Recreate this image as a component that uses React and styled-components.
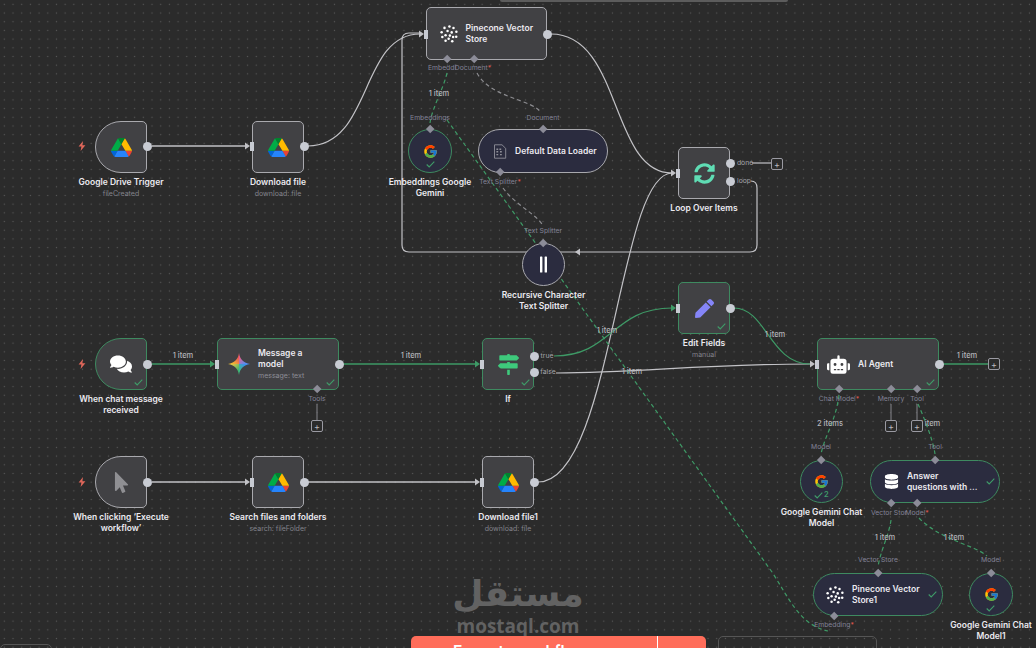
import React from "react";
import styled, { createGlobalStyle } from "styled-components";
import { FaComments, FaDatabase, FaMapSigns, FaMousePointer, FaPen, FaRobot, FaSyncAlt } from "react-icons/fa";
import { FcGoogle } from "react-icons/fc";

const GlobalStyle = createGlobalStyle`
  html, body { margin: 0; padding: 0; background: #2b2b2b; }
  body { font-family: Inter, "Liberation Sans", sans-serif; overflow: hidden; }
`;

const Canvas = styled.div`
  position: relative;
  width: 1036px;
  height: 648px;
  overflow: hidden;
  background-color: #2b2b2b;
  background-image: radial-gradient(circle, #585858 0.7px, transparent 1px);
  background-size: 8.7px 8.7px;
`;

const Wires = styled.svg`
  position: absolute;
  inset: 0;
  width: 1036px;
  height: 648px;
`;

const TopHandle = styled.div`
  position: absolute;
  top: 0;
  left: 500px;
  width: 288px;
  height: 2px;
  background: #5c5c5c;
  border-radius: 0 0 4px 4px;
`;

const NodeBox = styled.div`
  position: absolute;
  left: ${(p) => p.$x}px;
  top: ${(p) => p.$y}px;
  width: ${(p) => p.$w}px;
  height: ${(p) => p.$h}px;
  box-sizing: border-box;
  display: flex;
  align-items: center;
  justify-content: ${(p) => (p.$title ? "flex-start" : "center")};
  padding: 0 ${(p) => (p.$title ? p.$pad : 0)}px;
  gap: 8px;
  background: ${(p) => (p.$round ? "#2b2c3f" : "#414144")};
  border: 1.5px solid ${(p) => (p.$ok ? "#3e8a60" : "#a9a9ae")};
  border-radius: ${(p) => (p.$round ? "22px" : p.$trigger ? "26px 5px 5px 26px" : "5px")};

  & > svg {
    flex-shrink: 0;
  }
`;

const InlineTitle = styled.div`
  font-size: 8.5px;
  line-height: 11px;
  font-weight: 600;
  color: #eceaf0;
  white-space: pre;
`;

const InlineSub = styled.div`
  font-size: 7px;
  line-height: 11px;
  font-weight: 400;
  color: #8d8d96;
`;

const Caption = styled.div`
  position: absolute;
  top: calc(100% + 5px);
  left: 50%;
  transform: translateX(-50%);
  width: 130px;
  text-align: center;
  font-size: 8.5px;
  line-height: 11px;
  font-weight: 600;
  color: #eceaf0;
  white-space: pre-line;
`;

const CaptionSub = styled.div`
  font-size: 7px;
  line-height: 11px;
  font-weight: 400;
  color: #83838c;
`;

const Check = styled.svg`
  position: absolute;
  right: ${(p) => p.$right}px;
  bottom: ${(p) => p.$bottom}px;
  width: 9px;
  height: 7px;
`;

const CheckCount = styled.span`
  position: absolute;
  left: 23px;
  bottom: 3px;
  font-size: 7.5px;
  line-height: 9px;
  font-weight: 600;
  color: #3f9b68;
`;

const Bolt = styled.svg`
  position: absolute;
  left: ${(p) => p.$x}px;
  top: ${(p) => p.$y}px;
  width: 8px;
  height: 10px;
`;

const OutDot = styled.span`
  position: absolute;
  left: ${(p) => p.$x - 4.5}px;
  top: ${(p) => p.$y - 4.5}px;
  width: 9px;
  height: 9px;
  border-radius: 50%;
  background: #c8cbd3;
`;

const InPin = styled.span`
  position: absolute;
  left: ${(p) => p.$x - 2}px;
  top: ${(p) => p.$y - 4.5}px;
  width: 4px;
  height: 9px;
  background: #c8cbd3;
`;

const Diamond = styled.span`
  position: absolute;
  left: ${(p) => p.$x - 3.2}px;
  top: ${(p) => p.$y - 3.2}px;
  width: 6.4px;
  height: 6.4px;
  background: #8c8c98;
  transform: rotate(45deg);
`;

const PortLabel = styled.span`
  position: absolute;
  left: ${(p) => p.$x}px;
  top: ${(p) => p.$y - 5}px;
  transform: translateX(-50%);
  font-size: 6.8px;
  line-height: 10px;
  color: ${(p) => (p.$out ? "#a6a6ac" : "#828296")};
  white-space: nowrap;
`;

const Required = styled.span`
  color: #e0584f;
`;

const ItemCount = styled.span`
  position: absolute;
  left: ${(p) => p.$x}px;
  top: ${(p) => p.$y - 5}px;
  transform: translateX(-50%);
  font-size: 7.5px;
  line-height: 10px;
  font-weight: 500;
  color: #b4b4ba;
  white-space: nowrap;
`;

const AddButton = styled.span`
  position: absolute;
  left: ${(p) => p.$x}px;
  top: ${(p) => p.$y}px;
  width: 12px;
  height: 12px;
  box-sizing: border-box;
  display: flex;
  align-items: center;
  justify-content: center;
  border: 1px solid #9a9aa2;
  border-radius: 2px;
  background: #2b2b2b;
  color: #b8b8be;
  font-size: 9px;
  line-height: 9px;
`;

const Watermark = styled.div`
  position: absolute;
  left: 450px;
  top: 572px;
  width: 136px;
  display: flex;
  flex-direction: column;
  align-items: center;
  color: #626262;
  font-weight: 700;
`;

const WatermarkArabic = styled.div`
  font-family: "DejaVu Sans", sans-serif;
  font-size: 36px;
  line-height: 44px;
  height: 44px;
`;

const WatermarkLatin = styled.div`
  font-family: "Open Sans", sans-serif;
  font-size: 19px;
  line-height: 20px;
`;

const ExecuteBar = styled.div`
  position: absolute;
  left: 411px;
  top: 636px;
  width: 295px;
  height: 44px;
  display: flex;
  border-radius: 5px 5px 0 0;
  background: #ff6d5a;
  color: #fff;
  font-size: 15.5px;
  font-weight: 600;
`;

const ExecuteLabel = styled.div`
  flex: 1;
  padding: 6px 0 0 42px;
  border-right: 1px solid #fff;
`;

const ExecuteArrow = styled.div`
  width: 48px;
`;

const GhostButton = styled.div`
  position: absolute;
  left: ${(p) => p.$x}px;
  top: ${(p) => p.$y}px;
  width: ${(p) => p.$w}px;
  height: 40px;
  box-sizing: border-box;
  border: 1px solid #555;
  border-radius: 5px;
`;

const DriveIcon = () => (
  <svg width="21" height="19" viewBox="0 0 87.3 78">
    <path d="m6.6 66.85 3.85 6.65c.8 1.4 1.95 2.5 3.3 3.3l13.75-23.8h-27.5c0 1.55.4 3.1 1.2 4.5z" fill="#0066da" />
    <path d="m43.65 25-13.75-23.8c-1.35.8-2.5 1.9-3.3 3.3l-25.4 44a9.06 9.06 0 0 0 -1.2 4.5h27.5z" fill="#00ac47" />
    <path d="m73.55 76.8c1.35-.8 2.5-1.9 3.3-3.3l1.6-2.75 7.65-13.25c.8-1.4 1.2-2.95 1.2-4.5h-27.502l5.852 11.5z" fill="#ea4335" />
    <path d="m43.65 25 13.75-23.8c-1.35-.8-2.9-1.2-4.5-1.2h-18.5c-1.6 0-3.15.45-4.5 1.2z" fill="#00832d" />
    <path d="m59.8 53h-32.3l-13.75 23.8c1.35.8 2.9 1.2 4.5 1.2h50.8c1.6 0 3.15-.45 4.5-1.2z" fill="#2684fc" />
    <path d="m73.4 26.5-12.7-22c-.8-1.4-1.95-2.5-3.3-3.3l-13.75 23.8 16.15 28h27.45c0-1.55-.4-3.1-1.2-4.5z" fill="#ffba00" />
  </svg>
);

const GeminiIcon = () => (
  <svg width="22" height="22" viewBox="0 0 24 24">
    <defs>
      <linearGradient id="gemTL" x1="0" y1="0.5" x2="0.5" y2="0">
        <stop offset="0" stopColor="#f2b632" />
        <stop offset="1" stopColor="#ee5a55" />
      </linearGradient>
      <linearGradient id="gemTR" x1="0.5" y1="0" x2="1" y2="0.5">
        <stop offset="0" stopColor="#e8608f" />
        <stop offset="1" stopColor="#5b8cf0" />
      </linearGradient>
      <linearGradient id="gemBL" x1="0" y1="0.5" x2="0.5" y2="1">
        <stop offset="0" stopColor="#d9c24a" />
        <stop offset="1" stopColor="#3fb56e" />
      </linearGradient>
      <linearGradient id="gemBR" x1="0.5" y1="1" x2="1" y2="0.5">
        <stop offset="0" stopColor="#3fb98a" />
        <stop offset="1" stopColor="#3f8ef0" />
      </linearGradient>
    </defs>
    <path d="M12 0C12.8 6.6 17.4 11.2 24 12H12Z" fill="url(#gemTR)" />
    <path d="M24 12C17.4 12.8 12.8 17.4 12 24V12Z" fill="url(#gemBR)" />
    <path d="M12 24C11.2 17.4 6.6 12.8 0 12H12Z" fill="url(#gemBL)" />
    <path d="M0 12C6.6 11.2 11.2 6.6 12 0V12Z" fill="url(#gemTL)" />
  </svg>
);

// ring of small blobs, roughly the pinecone mark at this size
const PineconeIcon = () => {
  const blobs = [
    [10.5, 1.6], [5, 3.2], [15, 3.4], [1.8, 8], [18.2, 7.6], [2.6, 13.4], [18, 13], [6.2, 17.6], [13.6, 18],
    [8.4, 6.6], [13, 8.2], [6.2, 11.4], [11, 11.8], [14.6, 13.4], [9.6, 15.4],
  ];
  return (
    <svg width="18" height="18" viewBox="0 0 20 20">
      {blobs.map(([cx, cy]) => (
        <circle key={`${cx}-${cy}`} cx={cx} cy={cy} r="1.4" fill="#fff" />
      ))}
    </svg>
  );
};

const LoaderIcon = () => (
  <svg width="14" height="15" viewBox="0 0 14 15" fill="none" stroke="#8f8f98" strokeWidth="0.9">
    <path d="M1.5.8H9L12.7 4.4V14.2H1.5Z" />
    <path d="M3.4 5.2h1.8M6.4 5.2h1.8M3.4 7.8h1.8M7 7.8h1.8M3.4 10.6h1.8M7 10.6h1.8" strokeWidth="1.4" />
  </svg>
);

const SplitterIcon = () => (
  <svg width="9" height="17" viewBox="0 0 9 17" fill="#fff">
    <rect x="1" y="0.5" width="2.4" height="16" rx="0.6" />
    <rect x="5.6" y="0.5" width="2.4" height="16" rx="0.6" />
  </svg>
);

const nodes = [
  { x: 95, y: 121, trigger: true, icon: <DriveIcon />, caption: "Google Drive Trigger", sub: "fileCreated" },
  { x: 252, y: 121, icon: <DriveIcon />, caption: "Download file", sub: "download: file" },
  { x: 426, y: 7, w: 121, h: 53, pad: 12.5, icon: <PineconeIcon />, title: "Pinecone Vector\nStore" },
  { x: 678, y: 147, icon: <FaSyncAlt size={21} color="#5fdcb4" />, caption: "Loop Over Items" },
  { x: 408, y: 129, w: 44, h: 44, round: true, ok: true, check: [16, 4], icon: <FcGoogle size={15} />, caption: "Embeddings Google\nGemini" },
  { x: 478, y: 129, w: 130, h: 44, round: true, pad: 14, icon: <LoaderIcon />, title: "Default Data Loader" },
  { x: 522, y: 243, w: 43, h: 43, round: true, icon: <SplitterIcon />, caption: "Recursive Character\nText Splitter" },
  { x: 95, y: 338, trigger: true, ok: true, check: [3, 3], icon: <FaComments size={22} color="#fff" />, caption: "When chat message\nreceived" },
  { x: 217, y: 338, w: 122, pad: 10, ok: true, check: [3, 3], icon: <GeminiIcon />, title: "Message a\nmodel", inlineSub: "message: text" },
  { x: 482, y: 338, ok: true, check: [3, 3], icon: <FaMapSigns size={21} color="#3ec97c" />, caption: "If" },
  { x: 678, y: 282, ok: true, check: [3, 3], icon: <FaPen size={19} color="#8585f8" />, caption: "Edit Fields", sub: "manual" },
  { x: 817, y: 338, w: 122, pad: 9, ok: true, check: [3, 3], icon: <FaRobot size={23} color="#fff" />, title: "AI Agent" },
  { x: 95, y: 456, trigger: true, icon: <FaMousePointer size={21} color="#8f8f93" />, caption: "When clicking \u2018Execute\nworkflow\u2019" },
  { x: 252, y: 456, icon: <DriveIcon />, caption: "Search files and folders", sub: "search: fileFolder" },
  { x: 482, y: 456, icon: <DriveIcon />, caption: "Download file1", sub: "download: file" },
  { x: 800, y: 460, w: 43, h: 43, round: true, ok: true, check: [19, 3], count: "2", icon: <FcGoogle size={15} />, caption: "Google Gemini Chat\nModel" },
  { x: 870, y: 460, w: 130, h: 43, round: true, pad: 13, ok: true, check: [4, 17], icon: <FaDatabase size={15} color="#fff" />, title: "Answer\nquestions with ..." },
  { x: 813, y: 573, w: 130, h: 43, round: true, pad: 12, ok: true, check: [5, 17], icon: <PineconeIcon />, title: "Pinecone Vector\nStore1" },
  { x: 969, y: 573, w: 44, h: 43, round: true, ok: true, check: [17, 3], icon: <FcGoogle size={15} />, caption: "Google Gemini Chat\nModel1" },
];

const solid = "#c2c2c6";
const green = "#3e9a66";
const dashGreen = "#3e9a66";
const dashGrey = "#8c8c90";

const wires = [
  { d: "M152 146H246", c: solid, w: 1.6 },
  { d: "M308 146C372 146 360 34 420 34", c: solid },
  { d: "M551 34C622 34 610 173 672 173", c: solid },
  { d: "M751 181Q757 181 757 188V245Q757 252 750 252H409Q402 252 402 245V40Q402 33 409 33H420", c: solid },
  { d: "M752 163H771", c: solid },
  { d: "M538 482C612 482 618 173 672 173", c: solid },
  { d: "M152 482H246", c: solid, w: 1.6 },
  { d: "M308 482H476", c: solid, w: 1.6 },
  { d: "M556 373C640 373 700 364 810 364", c: solid },
  { d: "M152 364H211", c: green, w: 1.6 },
  { d: "M343 364H476", c: green, w: 1.6 },
  { d: "M554 356C612 356 612 308 672 308", c: green },
  { d: "M734 308C766 308 770 364 810 364", c: green },
  { d: "M943 364H988", c: green, w: 1.6 },
  { d: "M317 404V420", c: "#77777c" },
  { d: "M891 404V420", c: "#77777c" },
  { d: "M917 404V420", c: "#77777c" },
  { d: "M477 73C490 98 535 100 541 113", c: dashGrey, dash: true },
  { d: "M503 188C515 205 538 215 543 226", c: dashGrey, dash: true },
  { d: "M447 73C443 90 432 108 430 123", c: dashGreen, dash: true },
  { d: "M447 120L772 572C790 600 800 625 828 631", c: dashGreen, dash: true },
  { d: "M839 395C836 420 825 435 821 454", c: dashGreen, dash: true },
  { d: "M918 404C925 420 933 440 935 454", c: dashGreen, dash: true },
  { d: "M891 520C889 535 880 552 878 567", c: dashGreen, dash: true },
  { d: "M919 518C940 540 975 545 987 556", c: dashGreen, dash: true },
];

const arrows = [
  { x: 250, y: 146, c: solid },
  { x: 250, y: 482, c: solid },
  { x: 480, y: 482, c: solid },
  { x: 424, y: 34, c: solid },
  { x: 676, y: 173, c: solid },
  { x: 215, y: 364, c: green },
  { x: 480, y: 364, c: green },
  { x: 676, y: 308, c: green },
  { x: 815, y: 364, c: solid },
];

const dots = [
  [147, 146], [304, 146], [547, 34], [730, 163], [730, 181], [147, 364], [339, 364], [534, 356], [534, 372],
  [730, 308], [939, 364], [147, 482], [304, 482], [534, 482],
];

const pins = [[252, 146], [426, 34], [678, 173], [217, 364], [482, 364], [678, 308], [817, 364], [252, 482], [482, 482]];

const diamonds = [
  [447, 59], [474, 59], [430, 129], [543, 129], [500, 172], [543, 243], [317, 389], [839, 389], [891, 389], [917, 389],
  [821, 460], [935, 460], [891, 503], [917, 503], [878, 573], [991, 573], [834, 616],
];

const portLabels = [
  { x: 442, y: 68, text: "Embeddi" },
  { x: 473, y: 68, text: "Document", req: true },
  { x: 430, y: 118, text: "Embeddings" },
  { x: 543, y: 118, text: "Document" },
  { x: 500, y: 182, text: "Text Splitter", req: true },
  { x: 543, y: 231, text: "Text Splitter" },
  { x: 317, y: 399, text: "Tools" },
  { x: 839, y: 399, text: "Chat Model", req: true },
  { x: 891, y: 399, text: "Memory" },
  { x: 917, y: 399, text: "Tool" },
  { x: 821, y: 447, text: "Model" },
  { x: 935, y: 447, text: "Tool" },
  { x: 889, y: 513, text: "Vector Stor" },
  { x: 917, y: 513, text: "Model", req: true },
  { x: 878, y: 560, text: "Vector Store" },
  { x: 991, y: 560, text: "Model" },
  { x: 834, y: 625, text: "Embedding", req: true },
  { x: 745, y: 163, text: "done", out: true },
  { x: 744, y: 181, text: "loop", out: true },
  { x: 547, y: 356, text: "true", out: true },
  { x: 548, y: 372, text: "false", out: true },
];

const counts = [
  [439, 94, "1 item"], [183, 356, "1 item"], [411, 356, "1 item"], [607, 331, "1 item"], [632, 372, "1 item"],
  [775, 335, "1 item"], [967, 356, "1 item"], [830, 424, "2 items"], [930, 424, "1 item"], [885, 538, "1 item"], [954, 538, "1 item"],
];

const adds = [[771, 158], [311, 420], [885, 420], [911, 420], [988, 358]];

const Node = ({ n }) => (
  <NodeBox
    $x={n.x}
    $y={n.y}
    $w={n.w || 52}
    $h={n.h || 52}
    $pad={n.pad}
    $title={!!n.title}
    $round={n.round}
    $trigger={n.trigger}
    $ok={n.ok}
  >
    {n.icon}
    {n.title && (
      <div>
        <InlineTitle>{n.title}</InlineTitle>
        {n.inlineSub && <InlineSub>{n.inlineSub}</InlineSub>}
      </div>
    )}
    {n.check && (
      <Check $right={n.check[0]} $bottom={n.check[1]} viewBox="0 0 9 7" fill="none" stroke="#3f9b68" strokeWidth="1.1">
        <path d="M.7 3.5 3.2 6 8.3.7" />
      </Check>
    )}
    {n.count && <CheckCount>{n.count}</CheckCount>}
    {n.caption && (
      <Caption>
        {n.caption}
        {n.sub && <CaptionSub>{n.sub}</CaptionSub>}
      </Caption>
    )}
  </NodeBox>
);

export default function App() {
  return (
    <Canvas>
      <GlobalStyle />
      <TopHandle />
      <Wires viewBox="0 0 1036 648" fill="none">
        {wires.map((w) => (
          <path key={w.d} d={w.d} stroke={w.c} strokeWidth={w.w || 1.2} strokeDasharray={w.dash ? "4 3" : undefined} />
        ))}
        {arrows.map((a) => (
          <path key={`${a.x}-${a.y}`} d={`M${a.x - 5} ${a.y - 3.5}L${a.x} ${a.y}L${a.x - 5} ${a.y + 3.5}Z`} fill={a.c} />
        ))}
        <path d="M575 252L580 248.5V255.5Z" fill={solid} />
      </Wires>
      {nodes.map((n) => (
        <Node key={`${n.x}-${n.y}`} n={n} />
      ))}
      {dots.map(([x, y]) => (
        <OutDot key={`${x}-${y}`} $x={x} $y={y} />
      ))}
      {pins.map(([x, y]) => (
        <InPin key={`${x}-${y}`} $x={x} $y={y} />
      ))}
      {diamonds.map(([x, y]) => (
        <Diamond key={`${x}-${y}`} $x={x} $y={y} />
      ))}
      {portLabels.map((l) => (
        <PortLabel key={`${l.x}-${l.y}`} $x={l.x} $y={l.y} $out={l.out}>
          {l.text}
          {l.req && <Required>*</Required>}
        </PortLabel>
      ))}
      {counts.map(([x, y, text]) => (
        <ItemCount key={`${x}-${y}`} $x={x} $y={y}>
          {text}
        </ItemCount>
      ))}
      {adds.map(([x, y]) => (
        <AddButton key={`${x}-${y}`} $x={x} $y={y}>
          +
        </AddButton>
      ))}
      {[146, 364, 482].map((y) => (
        <Bolt key={y} $x={78} $y={y - 5} viewBox="0 0 8 10" fill="#e0675a">
          <path d="M5 0 .6 5.6H3.4L2.6 10 7.4 4.2H4.4Z" />
        </Bolt>
      ))}
      <Watermark>
        <WatermarkArabic dir="rtl">مستقل</WatermarkArabic>
        <WatermarkLatin>mostaql.com</WatermarkLatin>
      </Watermark>
      <ExecuteBar>
        <ExecuteLabel>Execute workflow</ExecuteLabel>
        <ExecuteArrow />
      </ExecuteBar>
      <GhostButton $x={718} $y={636} $w={159} />
      <GhostButton $x={0} $y={644} $w={52} />
    </Canvas>
  );
}
